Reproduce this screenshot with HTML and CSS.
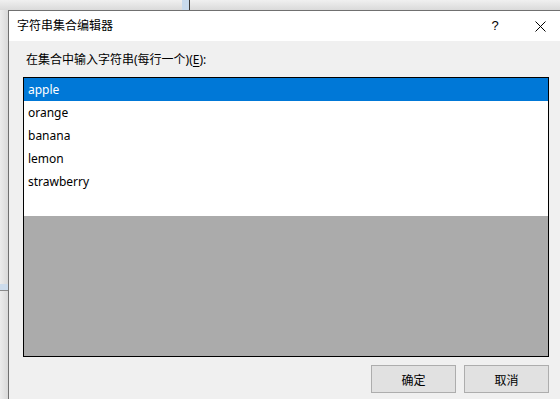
FILE: index.html
```html
<!DOCTYPE html>
<html lang="zh-CN">
<head>
    <meta charset="UTF-8">
    <title>字符串集合编辑器</title>
    <link rel="stylesheet" href="styles.css">
</head>
<body>
    <div class="behind">
        <div class="behind-cell"></div>
        <div class="behind-sel"></div>
        <div class="behind-rest"></div>
    </div>
    <div class="side-mark"></div>
    <div class="dialog">
        <div class="titlebar">
            <span class="title">字符串集合编辑器</span>
            <span class="tb-btn help">?</span>
            <span class="tb-btn close">
                <svg width="11" height="11" viewBox="0 0 11 11"><path d="M0.5 0.5 L10.5 10.5 M10.5 0.5 L0.5 10.5" stroke="#000" stroke-width="1"/></svg>
            </span>
        </div>
        <div class="content">
            <div class="prompt">在集合中输入字符串(每行一个)(<u>E</u>):</div>
            <div class="listbox">
                <div class="item selected">apple</div>
                <div class="item">orange</div>
                <div class="item">banana</div>
                <div class="item">lemon</div>
                <div class="item">strawberry</div>
                <div class="item"></div>
                <div class="empty"></div>
            </div>
            <div class="buttons">
                <button class="btn">确定</button>
                <button class="btn">取消</button>
            </div>
        </div>
    </div>
</body>
</html>
```

FILE: styles.css
```css
html, body {
    margin: 0;
    height: 100%;
    overflow: hidden;
}
body {
    font-family: "Noto Sans", "Noto Sans CJK SC", sans-serif;
    font-size: 12px;
    color: #000;
    background: linear-gradient(to right, #ececec, #d9d9d9 8px);
    position: relative;
}
.behind {
    display: flex;
    height: 10px;
    background: linear-gradient(to bottom, #f0f0f0, #dadada);
}
.behind-cell {
    width: 182px;
}
.behind-sel {
    width: 7px;
    background: #c8daec;
    border-right: 1px solid #3c3c3c;
}
.behind-rest {
    flex: 1;
}
.side-mark {
    position: absolute;
    left: 0;
    top: 284px;
    width: 8px;
    height: 6px;
    background: #cddcec;
    border-bottom: 1px solid #8a8a8a;
}
.dialog {
    margin-left: 8px;
    width: 551px;
    height: 388px;
    border-top: 1px solid #707070;
    border-left: 1px solid #707070;
    background: #f0f0f0;
}
.titlebar {
    display: flex;
    align-items: center;
    height: 30px;
    background: #fff;
    padding-left: 8px;
}
.title {
    flex: 1;
    line-height: 16px;
}
.tb-btn {
    display: flex;
    align-items: center;
    justify-content: center;
    height: 30px;
    line-height: 16px;
}
.help {
    width: 18px;
    margin-right: 31px;
    font-family: "Liberation Sans", sans-serif;
    font-size: 13px;
}
.close {
    width: 11px;
    margin-right: 14px;
}
.content {
    padding: 11px 0 0 14px;
    width: 526px;
}
.prompt {
    line-height: 16px;
    margin-bottom: 9px;
    padding-left: 3px;
}
.prompt u {
    text-underline-offset: 2px;
}
.listbox {
    height: 278px;
    border: 1px solid #000;
    background: #ababab;
    display: flex;
    flex-direction: column;
}
.item {
    height: 23px;
    line-height: 23px;
    padding-left: 4px;
    background: #fff;
}
.item.selected {
    background: #0078d7;
    color: #fff;
}
.empty {
    flex: 1;
}
.buttons {
    display: flex;
    justify-content: flex-end;
    gap: 8px;
    margin-top: 8px;
}
.btn {
    width: 85px;
    height: 28px;
    padding: 0;
    font-family: "Noto Sans CJK SC", sans-serif;
    font-size: 12px;
    color: #000;
    background: #e1e1e1;
    border: 1px solid #adadad;
    border-radius: 0;
}
```
